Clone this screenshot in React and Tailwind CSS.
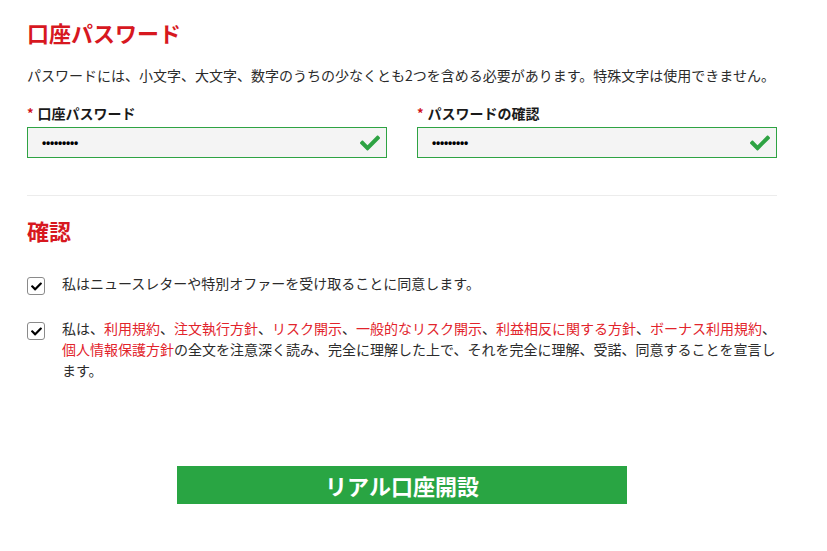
import React from "react";
import { FaCheck } from "react-icons/fa";

const FONT = "font-['Noto_Sans_CJK_JP','Noto_Sans',sans-serif]";

function Field({ label }) {
  return (
    <div className="flex flex-col">
      <div className="flex items-center h-[20px] text-[14px] leading-[20px]">
        <span className="text-[#d0121b] text-[13px] font-bold mr-[4px]">*</span>
        <span className="font-bold text-[#1a1a1a]">{label}</span>
      </div>
      <div className="mt-[4px] h-[31px] border border-[#2ea343] bg-[#f4f4f4] flex items-center justify-between pl-[14px] pr-[6px]">
        <span className="font-['Liberation_Sans',sans-serif] font-bold text-[12px] leading-none tracking-[-0.2px] text-black">
          •••••••••
        </span>
        <FaCheck className="text-[#2ea343] w-[20px] h-[20px]" />
      </div>
    </div>
  );
}

function Box() {
  return (
    <div className="shrink-0 w-[18px] h-[18px] border border-[#8a8a8a] rounded-[3px] bg-white flex items-center justify-center">
      <FaCheck className="w-[11px] h-[11px] text-black" />
    </div>
  );
}

const R = ({ children }) => <span className="text-[#e2242c]">{children}</span>;

export default function App() {
  return (
    <div className={`w-[827px] h-[551px] bg-white ${FONT} text-[#2b2b2b]`}>
      <div className="ml-[27px] w-[750px] pt-[17px]">
        <h2 className="text-[22px] leading-[30px] font-bold text-[#d7181f]">口座パスワード</h2>
        <p className="mt-[18px] text-[14px] leading-[20px] whitespace-nowrap">
          パスワードには、小文字、大文字、数字のうちの少なくとも2つを含める必要があります。特殊文字は使用できません。
        </p>
        <div className="mt-[18px] grid grid-cols-2 gap-[30px]">
          <Field label="口座パスワード" />
          <Field label="パスワードの確認" />
        </div>
        <div className="mt-[37px] h-px bg-[#ececec]" />
        <h2 className="mt-[19px] text-[22px] leading-[30px] font-bold text-[#d7181f]">確認</h2>

        <div className="mt-[28px] flex items-start gap-[17px]">
          <div className="mt-[4px]"><Box /></div>
          <p className="flex-1 text-[14px] leading-[21px]">
            私はニュースレターや特別オファーを受け取ることに同意します。
          </p>
        </div>

        <div className="mt-[23px] flex items-start gap-[17px]">
          <div className="mt-[4px]"><Box /></div>
          <p className="flex-1 text-[14px] leading-[21px]">
            私は、<R>利用規約</R>、<R>注文執行方針</R>、<R>リスク開示</R>、<R>一般的なリスク開示</R>、<R>利益相反に関する方針</R>、<R>ボーナス利用規約</R>、<R>個人情報保護方針</R>の全文を注意深く読み、完全に理解した上で、それを完全に理解、受諾、同意することを宣言します。
          </p>
        </div>

        <button className="mt-[85px] mx-auto block w-[450px] h-[38px] bg-[#29a543] text-white text-[22px] font-bold leading-[38px] text-center">
          リアル口座開設
        </button>
      </div>
    </div>
  );
}
